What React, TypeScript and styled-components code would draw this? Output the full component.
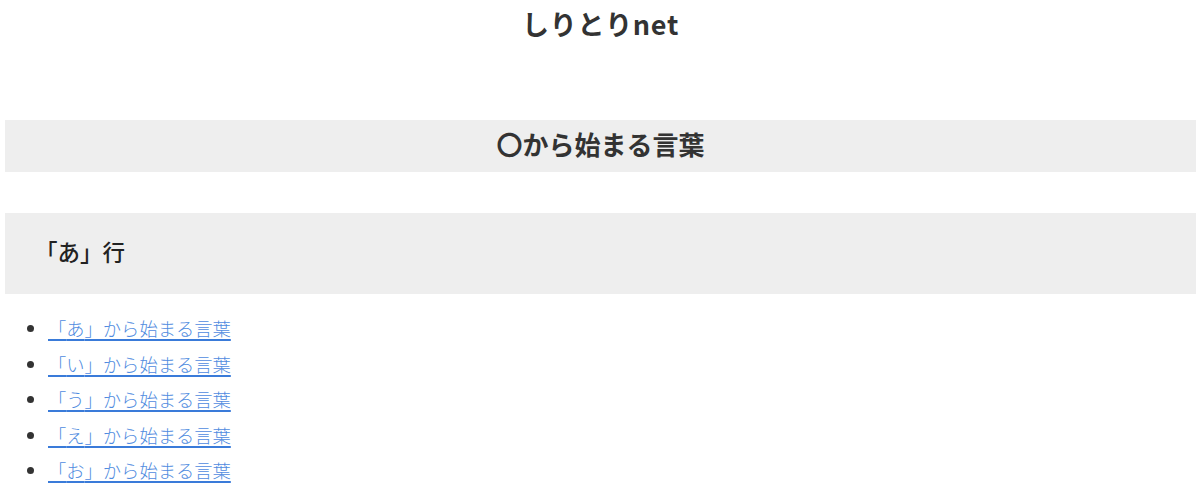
import React from "react";
import styled, { createGlobalStyle } from "styled-components";

const GlobalStyle = createGlobalStyle`
  html, body { margin: 0; padding: 0; background: #ffffff; }
  body {
    font-family: "Noto Sans CJK JP", "Noto Sans", sans-serif;
    color: #333333;
  }
`;

const Page = styled.div`
  padding: 0 4px 0 5px;
`;

const SiteTitle = styled.h1`
  margin: 0 0 68px;
  height: 52px;
  padding-bottom: 4px;
  box-sizing: border-box;
  line-height: 48px;
  text-align: center;
  font-size: 27px;
  font-weight: 700;
  letter-spacing: 0.7px;
  color: #333333;
`;

const PageHeading = styled.h2`
  margin: 0 0 41px;
  height: 52px;
  padding-bottom: 5px;
  box-sizing: border-box;
  line-height: 47px;
  background: #eeeeee;
  text-align: center;
  font-size: 26px;
  font-weight: 700;
  color: #333333;
`;

const SectionHeading = styled.h3`
  margin: 0;
  height: 81px;
  padding: 0 0 5px 30px;
  box-sizing: border-box;
  line-height: 76px;
  background: #eeeeee;
  font-size: 22.5px;
  font-weight: 500;
  color: #222222;
`;

const List = styled.ul`
  margin: 17px 0 0;
  padding: 0 0 0 43px;
`;

const Item = styled.li`
  font-size: 18.3px;
  line-height: 35.5px;
  color: #333333;
`;

const Link = styled.a`
  color: #4f8be0;
  text-decoration: underline;
  text-decoration-color: #3a7bd9;
  text-decoration-thickness: 1.5px;
  text-underline-offset: 3px;
  font-weight: 300;
`;

const kana = ["あ", "い", "う", "え", "お"];

export default function App() {
  return (
    <>
      <GlobalStyle />
      <Page>
        <SiteTitle>しりとりnet</SiteTitle>
        <PageHeading>〇から始まる言葉</PageHeading>
        <section>
          <SectionHeading>「あ」行</SectionHeading>
          <List>
            {kana.map((k) => (
              <Item key={k}>
                <Link href="#">「{k}」から始まる言葉</Link>
              </Item>
            ))}
          </List>
        </section>
      </Page>
    </>
  );
}
